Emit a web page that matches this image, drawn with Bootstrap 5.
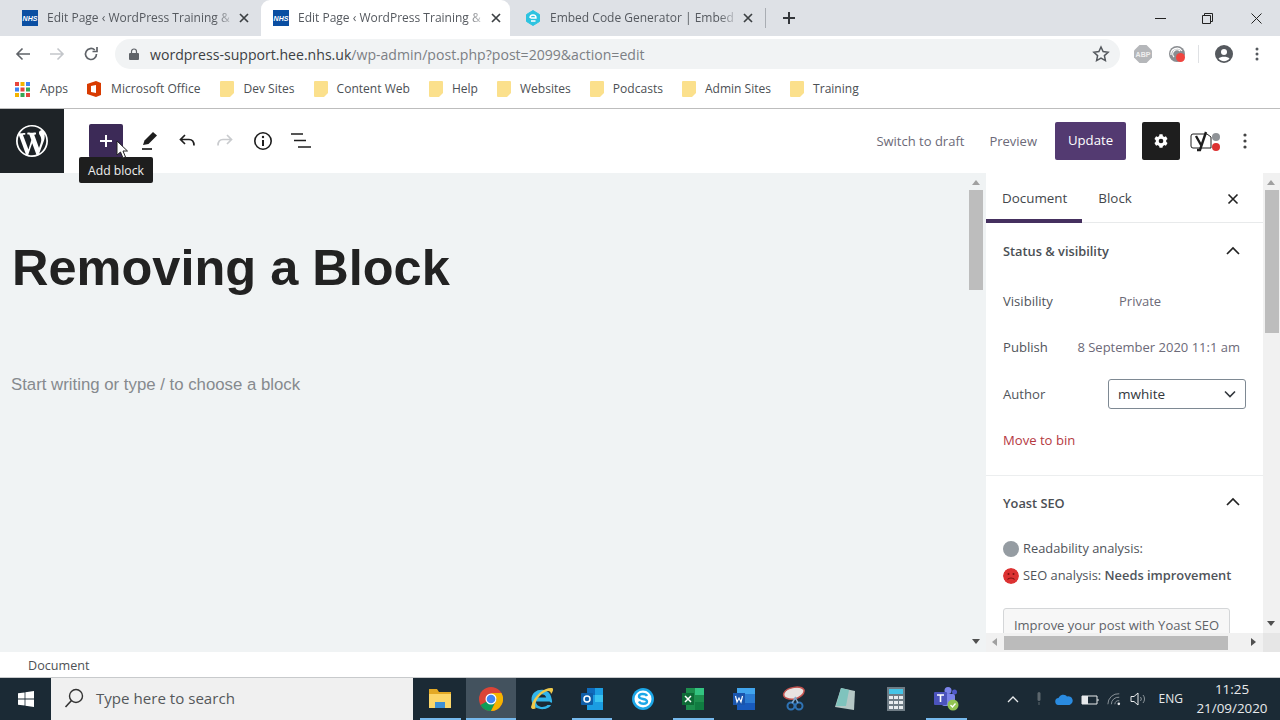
<!DOCTYPE html>
<html lang="en">
<head>
<meta charset="utf-8">
<title>Edit Page</title>
<link rel="stylesheet" href="https://cdn.jsdelivr.net/npm/bootstrap@5.3.0/dist/css/bootstrap.min.css">
<style>
html,body{height:720px;overflow:hidden;margin:0}
body{font-family:"Open Sans","Noto Sans",sans-serif;background:#fff;color:#3c4043;font-size:13px;width:1280px}
.l8{margin-left:8px}.l9{margin-left:9px}.l12{margin-left:12px}.l13{margin-left:13px}.l14{margin-left:14px}.l15{margin-left:15px}.l16{margin-left:16px}.l17{margin-left:17px}.l18{margin-left:18px}.l21{margin-left:21px}.l22{margin-left:22px}.l25{margin-left:25px}.l31{margin-left:31px}
.tabstrip{height:36px;background:#dee1e6;position:relative}
.chrome-tab{height:36px;width:251px;padding:0 1px 0 22px;color:#55595f;font-size:12px;white-space:nowrap}
.chrome-tab.on{background:#fff;border-radius:9px 9px 0 0;margin-left:10px;width:249px;padding:0 8px 0 12px}
.chrome-tab.third{width:246px;padding:0 2px 0 15px}
.tab-title{flex:1;overflow:hidden;margin-left:9px;-webkit-mask-image:linear-gradient(90deg,#000 88%,rgba(0,0,0,.25) 96%);mask-image:linear-gradient(90deg,#000 88%,rgba(0,0,0,.25) 96%)}
.tab-x{width:12px;height:12px;flex:none}
.tab-sep{width:1px;height:20px;background:#a9adb3;margin-left:9px}
.win-ctrl{margin-left:auto;padding-right:18px;gap:36px}
.win-close{margin-left:2px}
.addr-row{height:36px;padding:4px 0}
.nav-ico{width:18px;height:18px;flex:none}
.omnibox{width:1005px;height:30px;margin-left:15px;background:#f1f3f4;border-radius:15px;padding-left:14px;padding-right:10px;font-size:14.08px;white-space:nowrap}
.omnibox b{font-weight:400;color:#3c4043}
.omnibox span{color:#7c8084}
.url-box{margin-left:11px;flex:1;padding-top:2px}
.bar-sep{width:1px;height:18px;background:#dfe1e4;margin-left:12px}
.abp-text{font:700 7px "Liberation Sans",sans-serif;fill:#eee}
.bm-row{padding:0 0 2px 15px;font-size:12.05px;color:#4c5054;border-bottom:1px solid #bdbdbd;height:37px;white-space:nowrap}
.bm-item{margin-right:19px;gap:9px}
.bm-item.wide{gap:10px;margin-right:20px}
.bm-item.apps{gap:10px;margin-right:19px}
.wp-head{height:64px;background:#fff;position:relative}
.wp-logo{width:64px;height:64px;background:#1e2327}
.add-btn{width:34px;height:34px;background:#3c2a57;border-radius:2px;margin-left:25px;padding-right:1px}
.head-tool{width:20px;height:20px;margin-left:18px;flex:none}
.head-tool.pen{margin-left:17px}
.head-tool.undo{margin-left:17px}
.head-right{margin-left:auto;padding-right:33px;font-size:13px;color:#6c6a78}
.head-label{padding-top:2px}
.btn-update{background:#533a71;color:#fff;font-size:13.2px;width:71px;height:38px;padding:0;border:0;border-radius:2px;margin-left:18px}
.btn-gear{width:38px;height:38px;background:#1e1e1e;border-radius:2px;margin-left:16px}
.yoast-mark{margin-left:10px}
.tip{position:absolute;left:79px;top:48px;width:74px;height:26px;padding-top:2px;background:#1e1e1e;color:#eee;border-radius:2px;font-size:12.2px;z-index:5}
.pointer{position:absolute;left:116px;top:31px;z-index:6}
.work{height:479px}
.editor{width:968px;background:#f0f3f4;padding:67px 0 0 12px;font-family:"Liberation Sans",Arial,sans-serif}
.post-title{font-size:50.5px;font-weight:700;color:#222;line-height:56px;margin:0}
.post-ph{font-size:16.8px;color:#868a8e;margin:78px 0 0 -1px;line-height:22px}
.vbar{background:#f1f1f1;position:relative;flex:none}
.vbar.a{width:18px;background:#f0f3f4}
.vbar.b{width:17px}
.vbar i{position:absolute;top:17px;background:#bdbdbd;display:block}
.vbar.a i{height:100px;left:1px;right:3px}
.vbar.b i{height:143px;left:2px;right:1px}
.arr{position:absolute;left:4px;width:0;height:0;border-left:4px solid transparent;border-right:4px solid transparent}
.arr.up{top:7px;border-bottom:5px solid #a0a0a0}
.arr.dn{border-top:5px solid #505050}
.vbar.a .dn{top:466px}
.vbar.b .dn{top:448px}
.corner{position:absolute;left:0;right:0;bottom:0;height:19px;background:#e6e6e6}
.side{width:277px;background:#fff;position:relative;overflow:hidden;color:#50545a;font-size:13.1px}
.side-tabs{height:50px;border-bottom:1px solid #e8eaeb;position:relative;padding:2px 24px 0 16px;font-size:13.4px;color:#43474c}
.side-tabs u{position:absolute;left:0;bottom:-1px;width:96px;height:4px;background:#45305f;text-decoration:none}
.side-sec{padding:0 17px}
.sec-head{height:56px;padding-top:2px;font-weight:600;color:#4b4f54;font-size:12.8px}
.sec-head.yo{padding-top:0;padding-bottom:2px}
.chev{margin:0 6px 3px 0}
.rowline{height:46.33px}
.rowline.pub{padding-bottom:2px}
.k{width:116px;flex:none}
.link-v{color:#6c6a78;font-size:13px}
.link-v.date{margin-right:6px}
.sel-box{width:138px;height:30px;border:1px solid #7e8993;border-radius:3px;padding:0 9px;margin:0 0 2px auto;color:#32373c;font-size:13.5px}
.bin{color:#b5393f}
.divider{border-top:1px solid #eceeef;margin-top:11px}
.dot{width:16px;height:16px;border-radius:50%;flex:none;margin-right:4px}
.dot.grey{background:#959ca2}
.seo-row{height:27px;font-size:12.85px}
.seo-row.first{margin-top:3px}
.improve{width:227px;height:50px;border:1px solid #d4d6d8;border-radius:3px;background:#f7f7f7;color:#5f6368;text-align:center;padding-top:7px;margin-top:19px;white-space:nowrap;font-size:13px}
.hbar{position:absolute;left:0;right:0;bottom:0;height:19px;background:#f1f1f1}
.hbar i{position:absolute;left:18px;top:3px;width:224px;height:14px;background:#bbb}
.hl,.hr{position:absolute;top:5px;width:0;height:0;border-top:4px solid transparent;border-bottom:4px solid transparent}
.hl{left:6px;border-right:5px solid #a0a0a0}
.hr{right:7px;border-left:5px solid #505050}
.stat{height:25px;padding:4px 0 0 28px;font-size:12.6px;color:#4e5155;background:#fff}
.taskbar{height:43px;background:#1b2a35;color:#e8eaec;border-top:1px solid #c8cacc;position:relative}
.start{width:51px}
.search-box{width:362px;height:42px;background:#f0f0f0;color:#55585b;font-size:15.1px;padding:0 0 2px 13px;gap:12px;white-space:nowrap}
.tb-apps{padding-left:2px}
.tb-app{width:50.6px;height:42px;flex:none;position:relative}
.tb-app.run::after{content:"";position:absolute;left:5px;right:5px;bottom:0;height:2px;background:#76b9ed}
.tb-app.cur{background:#43525e}
.tb-app.cur::after{left:0;right:0}
.tray{margin-left:auto;font-size:12px;padding-right:11px}
.clock{width:74px;text-align:center;line-height:19px;font-size:13.4px;margin-left:12px}
</style>
</head>
<body>
<div class="tabstrip d-flex align-items-center">
  <div class="chrome-tab d-flex align-items-center">
    <svg width="16" height="16" viewBox="0 0 16 16"><rect width="16" height="16" fill="#0a4ea2"/><text x="8" y="10.500" text-anchor="middle" font-family="Liberation Sans" font-size="7" font-weight="700" font-style="italic" fill="#fff">NHS</text></svg>
    <div class="tab-title">Edit Page ‹ WordPress Training &amp;</div>
    <svg class="tab-x" viewBox="0 0 12 12"><path d="M2 2l8 8M10 2l-8 8" stroke="#3c4043" stroke-width="1.700"/></svg>
  </div>
  <div class="chrome-tab on d-flex align-items-center">
    <svg width="16" height="16" viewBox="0 0 16 16"><rect width="16" height="16" fill="#0a4ea2"/><text x="8" y="10.500" text-anchor="middle" font-family="Liberation Sans" font-size="7" font-weight="700" font-style="italic" fill="#fff">NHS</text></svg>
    <div class="tab-title">Edit Page ‹ WordPress Training &amp;</div>
    <svg class="tab-x" viewBox="0 0 12 12"><path d="M2 2l8 8M10 2l-8 8" stroke="#3c4043" stroke-width="1.700"/></svg>
  </div>
  <div class="chrome-tab third d-flex align-items-center">
    <svg width="16" height="16" viewBox="0 0 16 16"><path d="M8 .5l6.500 4v7L8 15.500l-6.500-4v-7z" fill="#2dc3e0" stroke="#2dc3e0" stroke-linejoin="round"/><path d="M5 8a3 3 0 1 1 6 0H5.500M10.500 11H6" fill="none" stroke="#fff" stroke-width="1.400"/></svg>
    <div class="tab-title">Embed Code Generator | Embed</div>
    <svg class="tab-x" viewBox="0 0 12 12"><path d="M2 2l8 8M10 2l-8 8" stroke="#3c4043" stroke-width="1.700"/></svg>
  </div>
  <div class="tab-sep"></div>
  <svg class="ms-3" width="14" height="14" viewBox="0 0 14 14"><path d="M7 1v12M1 7h12" stroke="#33363a" stroke-width="2"/></svg>
  <div class="win-ctrl d-flex align-items-center">
    <svg width="11" height="11" viewBox="0 0 11 11"><path d="M0 5.500h11" stroke="#222" stroke-width="1"/></svg>
    <svg width="11" height="11" viewBox="0 0 11 11"><path d="M.5 2.500h8v8h-8zM2.500 2.500v-2h8v8h-2" fill="none" stroke="#222"/></svg>
    <svg class="win-close" width="11" height="11" viewBox="0 0 11 11"><path d="M.5.500l10 10M10.500.500l-10 10" stroke="#222"/></svg>
  </div>
</div>
<div class="addr-row d-flex align-items-center">
  <svg class="nav-ico l14" viewBox="0 0 18 18"><path d="M16 9H3M8.500 3.500L3 9l5.500 5.500" fill="none" stroke="#5f6368" stroke-width="1.600"/></svg>
  <svg class="nav-ico l16" viewBox="0 0 18 18"><path d="M2 9h13M9.500 3.500L15 9l-5.500 5.500" fill="none" stroke="#c3c6ca" stroke-width="1.600"/></svg>
  <svg class="nav-ico l16" viewBox="0 0 18 18"><path d="M14.500 9a5.500 5.500 0 1 1-1.700-4M15 2v4.500h-4.500" fill="none" stroke="#5f6368" stroke-width="1.700"/></svg>
  <div class="omnibox d-flex align-items-center">
    <svg width="10" height="12" viewBox="0 0 10 12"><path d="M2.500 5V3.500a2.500 2.500 0 0 1 5 0V5" fill="none" stroke="#5f6368" stroke-width="1.200"/><rect y="5" width="10" height="7" rx="1" fill="#5f6368"/></svg>
    <div class="url-box"><b>wordpress-support.hee.nhs.uk</b><span>/wp-admin/post.php?post=2099&amp;action=edit</span></div>
    <svg width="18" height="18" viewBox="0 0 18 18"><path d="M9 2l2.100 4.600 5 .6-3.700 3.400 1 5L9 13.100l-4.400 2.500 1-5L1.900 7.200l5-.6z" fill="none" stroke="#55595e" stroke-width="1.500"/></svg>
  </div>
  <svg class="l14" width="18" height="18" viewBox="0 0 18 18"><path d="M5.500 0h7L18 5.500v7L12.500 18h-7L0 12.500v-7z" fill="#b5b7ba"/><text class="abp-text" x="9" y="11.500" text-anchor="middle">ABP</text></svg>
  <svg class="l16" width="18" height="18" viewBox="0 0 18 18"><circle cx="9" cy="9" r="8" fill="#8a8d91"/><path d="M3 10a6 6 0 0 1 11-4M6 12a4 4 0 0 1 6-6" fill="none" stroke="#fff" stroke-width="1.200"/><circle cx="12.500" cy="12.500" r="4.500" fill="#f0453f"/></svg>
  <div class="bar-sep"></div>
  <svg class="l16" width="18" height="18" viewBox="0 0 18 18"><circle cx="9" cy="9" r="9" fill="#55595e"/><circle cx="9" cy="7" r="3" fill="#fff"/><path d="M3.500 13.500c2-2.500 9-2.500 11 0-3 3.500-8 3.500-11 0z" fill="#fff"/></svg>
  <svg class="l22" width="4" height="14" viewBox="0 0 4 14"><circle cx="2" cy="2" r="1.500" fill="#55595e"/><circle cx="2" cy="7" r="1.500" fill="#55595e"/><circle cx="2" cy="12" r="1.500" fill="#55595e"/></svg>
</div>
<div class="bm-row d-flex align-items-center">
  <div class="bm-item apps d-flex align-items-center">
    <svg width="15" height="15" viewBox="0 0 15 15"><g><rect width="4" height="4" fill="#e8453c"/><rect x="5.500" width="4" height="4" fill="#f4b400"/><rect x="11" width="4" height="4" fill="#3f85f4"/><rect y="5.500" width="4" height="4" fill="#3f85f4"/><rect x="5.500" y="5.500" width="4" height="4" fill="#e8453c"/><rect x="11" y="5.500" width="4" height="4" fill="#34a853"/><rect y="11" width="4" height="4" fill="#f4b400"/><rect x="5.500" y="11" width="4" height="4" fill="#34a853"/><rect x="11" y="11" width="4" height="4" fill="#e8453c"/></g></svg>
    <span>Apps</span></div>
  <div class="bm-item wide d-flex align-items-center">
    <svg width="14" height="16" viewBox="0 0 14 16"><path d="M0 3l9-3 5 2v12l-5 2-9-3z" fill="#d83b01"/><path d="M4 5l5-1v8l-5-1z" fill="#fff"/></svg>
    <span>Microsoft Office</span></div>
  <div class="bm-item d-flex align-items-center"><svg width="14" height="16" viewBox="0 0 14 16"><path d="M1 0h12a1 1 0 0 1 1 1v11l-4 4H1a1 1 0 0 1-1-1V1a1 1 0 0 1 1-1z" fill="#fbe08c"/></svg><span>Dev Sites</span></div>
  <div class="bm-item d-flex align-items-center"><svg width="14" height="16" viewBox="0 0 14 16"><path d="M1 0h12a1 1 0 0 1 1 1v11l-4 4H1a1 1 0 0 1-1-1V1a1 1 0 0 1 1-1z" fill="#fbe08c"/></svg><span>Content Web</span></div>
  <div class="bm-item d-flex align-items-center"><svg width="14" height="16" viewBox="0 0 14 16"><path d="M1 0h12a1 1 0 0 1 1 1v11l-4 4H1a1 1 0 0 1-1-1V1a1 1 0 0 1 1-1z" fill="#fbe08c"/></svg><span>Help</span></div>
  <div class="bm-item d-flex align-items-center"><svg width="14" height="16" viewBox="0 0 14 16"><path d="M1 0h12a1 1 0 0 1 1 1v11l-4 4H1a1 1 0 0 1-1-1V1a1 1 0 0 1 1-1z" fill="#fbe08c"/></svg><span>Websites</span></div>
  <div class="bm-item d-flex align-items-center"><svg width="14" height="16" viewBox="0 0 14 16"><path d="M1 0h12a1 1 0 0 1 1 1v11l-4 4H1a1 1 0 0 1-1-1V1a1 1 0 0 1 1-1z" fill="#fbe08c"/></svg><span>Podcasts</span></div>
  <div class="bm-item d-flex align-items-center"><svg width="14" height="16" viewBox="0 0 14 16"><path d="M1 0h12a1 1 0 0 1 1 1v11l-4 4H1a1 1 0 0 1-1-1V1a1 1 0 0 1 1-1z" fill="#fbe08c"/></svg><span>Admin Sites</span></div>
  <div class="bm-item d-flex align-items-center"><svg width="14" height="16" viewBox="0 0 14 16"><path d="M1 0h12a1 1 0 0 1 1 1v11l-4 4H1a1 1 0 0 1-1-1V1a1 1 0 0 1 1-1z" fill="#fbe08c"/></svg><span>Training</span></div>
</div>
<div class="wp-head d-flex align-items-center">
  <div class="wp-logo d-flex align-items-center justify-content-center">
    <svg width="32" height="32" viewBox="0 0 20 20"><path fill="#fff" d="M20 10c0-5.510-4.490-10-10-10C4.480 0 0 4.490 0 10c0 5.520 4.480 10 10 10 5.510 0 10-4.480 10-10zM7.780 15.370L4.370 6.220c.55-.02 1.170-.08 1.170-.08.5-.06.44-1.130-.06-1.110 0 0-1.450.11-2.370.11-.18 0-.37 0-.58-.01C4.120 2.690 6.900 1.010 10 1.010c2.300 0 4.400.88 5.980 2.320-.67-.11-1.630.39-1.630 1.570 0 .73.44 1.350.89 2.080.35.61.55 1.350.55 2.440 0 1.480-1.390 4.960-1.390 4.960l-3.010-8.300c.54-.02.82-.17.82-.17.5-.05.44-1.250-.06-1.220 0 0-1.440.12-2.380.12-.87 0-2.330-.12-2.330-.12-.5-.03-.56 1.200-.06 1.220l.92.08 1.260 3.410zM17.410 10c.24-.64.74-1.870.43-4.250.7 1.290 1.050 2.710 1.050 4.250 0 3.290-1.730 6.240-4.400 7.780.97-2.590 1.940-5.200 2.920-7.780zM6.100 18.090C3.120 16.650 1.110 13.530 1.110 10c0-1.300.23-2.480.72-3.590C3.250 10.300 4.670 14.200 6.100 18.090zm4.030-6.630l2.580 6.980c-.86.29-1.740.45-2.710.45-.81 0-1.600-.11-2.340-.34.84-2.440 1.680-4.810 2.470-7.090z"/></svg>
  </div>
  <div class="add-btn d-flex align-items-center justify-content-center">
    <svg width="14" height="14" viewBox="0 0 14 14"><path d="M7 1v12M1 7h12" stroke="#fff" stroke-width="2"/></svg>
  </div>
  <svg class="head-tool pen" viewBox="0 0 20 20"><path d="M3 14l1.500-4.500L13 1l4 3.500-8.500 8.500z" fill="#1e1e1e"/><path d="M2 18h10" stroke="#1e1e1e" stroke-width="1.700"/></svg>
  <svg class="head-tool undo" viewBox="0 0 20 20"><path d="M8 4L3.500 8.500 8 13M4 8.500h8c3.500 0 5 2 5 6" fill="none" stroke="#1e1e1e" stroke-width="1.700"/></svg>
  <svg class="head-tool" viewBox="0 0 20 20"><path d="M12 4l4.500 4.500L12 13M16 8.500H8c-3.500 0-5 2-5 6" fill="none" stroke="#c9cbce" stroke-width="1.700"/></svg>
  <svg class="head-tool" viewBox="0 0 20 20"><circle cx="10" cy="10" r="8.200" fill="none" stroke="#1e1e1e" stroke-width="1.600"/><path d="M10 9v6" stroke="#1e1e1e" stroke-width="2"/><circle cx="10" cy="6" r="1.200" fill="#1e1e1e"/></svg>
  <svg class="head-tool" viewBox="0 0 20 20"><path d="M0 3h12M3 9.500h12M7 16h13" stroke="#1e1e1e" stroke-width="1.700"/></svg>
  <div class="head-right d-flex align-items-center">
    <span class="head-label">Switch to draft</span>
    <span class="head-label l25">Preview</span>
    <button type="button" class="btn btn-update">Update</button>
    <div class="btn-gear d-flex align-items-center justify-content-center">
      <svg width="16" height="16" viewBox="0 0 18 18"><g fill="#fff"><circle cx="9" cy="9" r="6"/><rect x="7" y="1.500" width="4" height="15" rx=".8"/><rect x="7" y="1.500" width="4" height="15" rx=".8" transform="rotate(60 9 9)"/><rect x="7" y="1.500" width="4" height="15" rx=".8" transform="rotate(120 9 9)"/></g><circle cx="9" cy="9" r="2.600" fill="#1e1e1e"/></svg>
    </div>
    <svg class="yoast-mark" width="32" height="24" viewBox="0 0 32 24"><path d="M3 5h14l4 3v11H3a2 2 0 0 1-2-2V7a2 2 0 0 1 2-2z" fill="none" stroke="#1e1e1e" stroke-width="1"/><path d="M6 7l5 9M16 3l-6 18H7" fill="none" stroke="#1e1e1e" stroke-width="2.400"/><circle cx="26" cy="8" r="4" fill="#8f9397"/><circle cx="26" cy="18" r="4" fill="#dc3232"/></svg>
    <svg class="l21" width="4" height="16" viewBox="0 0 4 16"><circle cx="2" cy="2" r="1.600" fill="#444"/><circle cx="2" cy="8" r="1.600" fill="#444"/><circle cx="2" cy="14" r="1.600" fill="#444"/></svg>
  </div>
  <div class="tip d-flex align-items-center justify-content-center">Add block</div>
  <svg class="pointer" width="13" height="20" viewBox="0 0 13 20"><path d="M1 1v14l3.500-3 2.500 6 2.500-1-2.500-6h4.500z" fill="#fff" stroke="#222" stroke-width="1"/></svg>
</div>
<div class="work d-flex">
  <div class="editor">
    <h1 class="post-title">Removing a Block</h1>
    <p class="post-ph">Start writing or type / to choose a block</p>
  </div>
  <div class="vbar a"><span class="arr up"></span><i></i><span class="arr dn"></span></div>
  <div class="side">
    <div class="side-tabs d-flex align-items-center">
      <span>Document</span><span class="l31">Block</span>
      <svg class="ms-auto" width="12" height="12" viewBox="0 0 12 12"><path d="M1.500 1.500l9 9M10.500 1.500l-9 9" stroke="#222" stroke-width="1.600"/></svg>
      <u></u>
    </div>
    <div class="side-sec">
      <div class="sec-head d-flex align-items-center justify-content-between">
        <span>Status &amp; visibility</span>
        <svg class="chev" width="14" height="9" viewBox="0 0 14 9"><path d="M1 8l6-6 6 6" fill="none" stroke="#222" stroke-width="1.700"/></svg>
      </div>
      <div class="rowline d-flex align-items-center"><span class="k">Visibility</span><span class="link-v">Private</span></div>
      <div class="rowline pub d-flex align-items-center justify-content-between"><span>Publish</span><span class="link-v date">8 September 2020 11:1 am</span></div>
      <div class="rowline d-flex align-items-center"><span>Author</span>
        <div class="sel-box d-flex align-items-center justify-content-between"><span>mwhite</span><svg width="12" height="8" viewBox="0 0 12 8"><path d="M1 1.500l5 5 5-5" fill="none" stroke="#32373c" stroke-width="1.600"/></svg></div>
      </div>
      <div class="rowline d-flex align-items-center bin">Move to bin</div>
    </div>
    <div class="divider"></div>
    <div class="side-sec">
      <div class="sec-head yo d-flex align-items-center justify-content-between">
        <span>Yoast SEO</span>
        <svg class="chev" width="14" height="9" viewBox="0 0 14 9"><path d="M1 8l6-6 6 6" fill="none" stroke="#222" stroke-width="1.700"/></svg>
      </div>
      <div class="seo-row first d-flex align-items-center"><span class="dot grey"></span><span>Readability analysis:</span></div>
      <div class="seo-row d-flex align-items-center"><svg class="dot" viewBox="0 0 16 16"><circle cx="8" cy="8" r="8" fill="#dc3232"/><circle cx="5.500" cy="6" r="1" fill="#7a1111"/><circle cx="10.500" cy="6" r="1" fill="#7a1111"/><path d="M4.500 11.500c1.500-2 5.500-2 7 0" fill="none" stroke="#7a1111" stroke-width="1.100"/></svg><span>SEO analysis: <strong class="fw-semibold">Needs improvement</strong></span></div>
      <div class="improve">Improve your post with Yoast SEO</div>
    </div>
    <div class="hbar"><span class="hl"></span><i></i><span class="hr"></span></div>
  </div>
  <div class="vbar b"><span class="arr up"></span><i></i><span class="arr dn"></span><span class="corner"></span></div>
</div>
<div class="stat d-flex align-items-center">Document</div>
<div class="taskbar d-flex">
  <div class="start d-flex align-items-center justify-content-center">
    <svg width="16" height="16" viewBox="0 0 16 16"><path d="M0 2.300L6.600 1.400V7.600H0zM7.400 1.300L16 0V7.600H7.400zM0 8.400H6.600V14.600L0 13.700zM7.400 8.400H16V16L7.400 14.700z" fill="#fff"/></svg>
  </div>
  <div class="search-box d-flex align-items-center">
    <svg width="20" height="20" viewBox="0 0 20 20"><circle cx="12" cy="8" r="6.500" fill="none" stroke="#333" stroke-width="1.400"/><path d="M7.500 12.500L1.500 19" stroke="#333" stroke-width="1.600"/></svg>
    <span>Type here to search</span>
  </div>
  <div class="tb-apps d-flex">
    <div class="tb-app run d-flex align-items-center justify-content-center"><svg width="24" height="20" viewBox="0 0 24 20"><path d="M1 0h8l2 3h12v4H1z" fill="#e3a925"/><rect x="1" y="5" width="22" height="14" fill="#fcd669"/><rect x="7" y="13" width="10" height="6" fill="#3c8fd6"/></svg></div>
    <div class="tb-app run cur d-flex align-items-center justify-content-center"><svg width="24" height="24" viewBox="0 0 24 24"><circle cx="12" cy="12" r="12" fill="#db4437"/><path d="M12 12L1.600 18 A12 12 0 0 0 12 24 L18 12z" fill="#0f9d58"/><path d="M12 24A12 12 0 0 0 22.400 6H12l6 6z" fill="#f4b400"/><circle cx="12" cy="12" r="5.500" fill="#fff"/><circle cx="12" cy="12" r="4.300" fill="#4285f4"/></svg></div>
    <div class="tb-app d-flex align-items-center justify-content-center"><svg width="26" height="26" viewBox="0 0 26 26"><path d="M21.500 15.500H8c0 5 7 7.500 11.500 3.500h3.500C20 25.500 3.500 25 3.500 13.500S20 .5 23 10.500 22 15.500 21.500 15.500zM8.200 11.500h10c-.5-4.500-9-4.500-10 0z" fill="#31b5ea"/><path d="M3 21C6 8 18 1 24 2c2 .5 1 4-1 6 0-3-3-4-6-2C9 10 5 20 8 22c-2 2-5 1-5-1z" fill="#efc94b"/></svg></div>
    <div class="tb-app run d-flex align-items-center justify-content-center"><svg width="24" height="24" viewBox="0 0 24 24"><rect x="7" y="1" width="16" height="22" fill="#1b9de2"/><rect x="7" y="1" width="8" height="7" fill="#0f6cbd"/><rect x="15" y="8" width="8" height="7" fill="#38c2f0"/><rect x="1" y="6" width="12" height="12" rx="1" fill="#0f5ea8"/><circle cx="7" cy="12" r="3" fill="none" stroke="#fff" stroke-width="1.500"/></svg></div>
    <div class="tb-app d-flex align-items-center justify-content-center"><svg width="24" height="24" viewBox="0 0 24 24"><path d="M12 1a11 11 0 0 1 11 11c0 6-5 11-11 11S1 18 1 12 6 1 12 1z" fill="#1ca7e8"/><circle cx="12" cy="12" r="8.500" fill="#fff"/><path d="M16 9c-1-2.500-8-3-8 .5 0 3.500 8 1.500 8 5 0 3-6.500 3-8 0" fill="none" stroke="#1ca7e8" stroke-width="2.400"/></svg></div>
    <div class="tb-app run d-flex align-items-center justify-content-center"><svg width="24" height="24" viewBox="0 0 24 24"><rect x="5" y="1" width="18" height="22" fill="#1d8f4e"/><rect x="14" y="1" width="9" height="7" fill="#33c481"/><rect x="14" y="15" width="9" height="8" fill="#107c41"/><rect x="1" y="6" width="12" height="12" fill="#0e6b37"/><path d="M4 9l6 6M10 9l-6 6" stroke="#fff" stroke-width="1.500"/></svg></div>
    <div class="tb-app d-flex align-items-center justify-content-center"><svg width="24" height="24" viewBox="0 0 24 24"><rect x="5" y="1" width="18" height="22" fill="#2b7cd3"/><rect x="5" y="1" width="18" height="6" fill="#41a5ee"/><rect x="5" y="16" width="18" height="7" fill="#185abd"/><rect x="1" y="6" width="12" height="12" fill="#1a55ad"/><path d="M3.500 9l1.500 6 2-4 2 4 1.500-6" fill="none" stroke="#fff" stroke-width="1.200"/></svg></div>
    <div class="tb-app d-flex align-items-center justify-content-center"><svg width="24" height="26" viewBox="0 0 24 26"><path d="M2 7c3-6 17-8 20-3 1 4-5 8-9 9-6 1-13-1-11-6z" fill="#e9e4e2" stroke="#c4534f" stroke-width="1.500"/><circle cx="9" cy="20" r="3.500" fill="none" stroke="#2f73b5" stroke-width="2"/><circle cx="17" cy="20" r="3.500" fill="none" stroke="#2f73b5" stroke-width="2"/><path d="M10 17l4-6M16 17l-3-6" stroke="#7fa9cf" stroke-width="1.500"/></svg></div>
    <div class="tb-app d-flex align-items-center justify-content-center"><svg width="22" height="24" viewBox="0 0 22 24"><path d="M7 1l14 3-1 19-19-3z" fill="#b5c7c5"/><path d="M7 1l8 2-3 16-10 0z" fill="#7fc3bd"/></svg></div>
    <div class="tb-app d-flex align-items-center justify-content-center"><svg width="18" height="24" viewBox="0 0 18 24"><rect width="18" height="24" fill="#6f7c85"/><rect x="2" y="2" width="14" height="5" fill="#45c4e6"/><g fill="#e8ecef"><rect x="2" y="9" width="4" height="3"/><rect x="7" y="9" width="4" height="3"/><rect x="12" y="9" width="4" height="3"/><rect x="2" y="14" width="4" height="3"/><rect x="7" y="14" width="4" height="3"/><rect x="12" y="14" width="4" height="3"/><rect x="2" y="19" width="4" height="3"/><rect x="7" y="19" width="4" height="3"/><rect x="12" y="19" width="4" height="3"/></g></svg></div>
    <div class="tb-app run d-flex align-items-center justify-content-center"><svg width="26" height="24" viewBox="0 0 26 24"><circle cx="15" cy="3.500" r="3.500" fill="#7b83eb"/><circle cx="21.500" cy="5" r="2.500" fill="#5059c9"/><rect x="9" y="7" width="13" height="12" rx="2" fill="#7b83eb"/><rect x="1" y="5" width="13" height="13" rx="1" fill="#4b53bc"/><path d="M4 8h7M7.500 8v7" stroke="#fff" stroke-width="1.600"/><circle cx="20" cy="18" r="5.500" fill="#92c353"/><path d="M17.500 18l2 2 3-3.500" fill="none" stroke="#fff" stroke-width="1.300"/></svg></div>
  </div>
  <div class="tray d-flex align-items-center">
    <svg width="12" height="8" viewBox="0 0 12 8"><path d="M1 7l5-5 5 5" fill="none" stroke="#e8eaec" stroke-width="1.300"/></svg>
    <svg class="l17" width="6" height="14" viewBox="0 0 6 14"><rect x="1.500" y="0" width="3" height="9" rx="1.500" fill="#5c666d"/><path d="M3 10v3" stroke="#5c666d"/></svg>
    <svg class="l13" width="18" height="11" viewBox="0 0 18 11"><path d="M4 11a3.500 3.500 0 0 1-.5-7A5 5 0 0 1 12 2.500 4.300 4.300 0 0 1 14.500 11z" fill="#2a8be0"/></svg>
    <svg class="l8" width="18" height="12" viewBox="0 0 18 12"><path d="M1 3h15v8H1z" fill="none" stroke="#e8eaec"/><rect x="1" y="3" width="6" height="8" fill="#e8eaec"/><path d="M17 6v2" stroke="#e8eaec"/></svg>
    <svg class="l8" width="14" height="14" viewBox="0 0 16 14"><path d="M1 13A12 12 0 0 1 14 1M5 13a8 8 0 0 1 9-8M9 13a4 4 0 0 1 5-4" fill="none" stroke="#8b949a" stroke-width="1.100"/><circle cx="13.500" cy="12.500" r="1.500" fill="#e8eaec"/></svg>
    <svg class="l9" width="17" height="14" viewBox="0 0 17 14"><path d="M1 4.500h3L8 1v12L4 9.500H1z" fill="none" stroke="#e8eaec"/><path d="M10.500 5a3 3 0 0 1 0 4M13 3a6 6 0 0 1 0 8" fill="none" stroke="#8b949a"/></svg>
    <span class="l12">ENG</span>
    <div class="clock">11:25<br>21/09/2020</div>
  </div>
</div>
</body>
</html>
